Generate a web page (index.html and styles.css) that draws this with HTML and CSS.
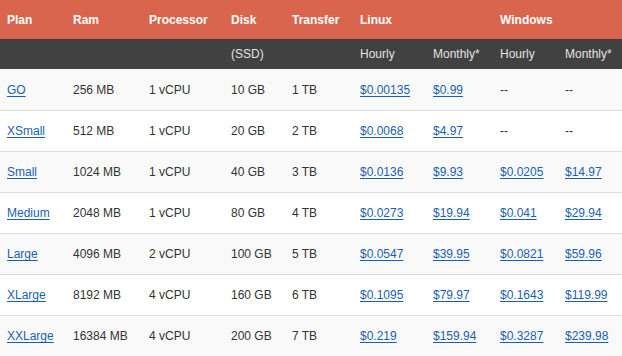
FILE: index.html
```html
<!DOCTYPE html>
<html>
<head>
<meta charset="utf-8">
<link rel="stylesheet" href="styles.css">
</head>
<body>
<table class="plans">
  <colgroup>
    <col class="c-plan"><col class="c-ram"><col class="c-proc"><col class="c-disk"><col class="c-xfer">
    <col class="c-lh"><col class="c-lm"><col class="c-wh"><col class="c-wm">
  </colgroup>
  <thead>
    <tr class="head">
      <th>Plan</th><th>Ram</th><th>Processor</th><th>Disk</th><th>Transfer</th>
      <th colspan="2">Linux</th><th colspan="2">Windows</th>
    </tr>
    <tr class="sub">
      <th></th><th></th><th></th><th>(SSD)</th><th></th>
      <th>Hourly</th><th>Monthly*</th><th>Hourly</th><th>Monthly*</th>
    </tr>
  </thead>
  <tbody>
    <tr><td><a href="#">GO</a></td><td>256 MB</td><td>1 vCPU</td><td>10 GB</td><td>1 TB</td><td><a href="#">$0.00135</a></td><td><a href="#">$0.99</a></td><td>--</td><td>--</td></tr>
    <tr><td><a href="#">XSmall</a></td><td>512 MB</td><td>1 vCPU</td><td>20 GB</td><td>2 TB</td><td><a href="#">$0.0068</a></td><td><a href="#">$4.97</a></td><td>--</td><td>--</td></tr>
    <tr><td><a href="#">Small</a></td><td>1024 MB</td><td>1 vCPU</td><td>40 GB</td><td>3 TB</td><td><a href="#">$0.0136</a></td><td><a href="#">$9.93</a></td><td><a href="#">$0.0205</a></td><td><a href="#">$14.97</a></td></tr>
    <tr><td><a href="#">Medium</a></td><td>2048 MB</td><td>1 vCPU</td><td>80 GB</td><td>4 TB</td><td><a href="#">$0.0273</a></td><td><a href="#">$19.94</a></td><td><a href="#">$0.041</a></td><td><a href="#">$29.94</a></td></tr>
    <tr><td><a href="#">Large</a></td><td>4096 MB</td><td>2 vCPU</td><td>100 GB</td><td>5 TB</td><td><a href="#">$0.0547</a></td><td><a href="#">$39.95</a></td><td><a href="#">$0.0821</a></td><td><a href="#">$59.96</a></td></tr>
    <tr><td><a href="#">XLarge</a></td><td>8192 MB</td><td>4 vCPU</td><td>160 GB</td><td>6 TB</td><td><a href="#">$0.1095</a></td><td><a href="#">$79.97</a></td><td><a href="#">$0.1643</a></td><td><a href="#">$119.99</a></td></tr>
    <tr><td><a href="#">XXLarge</a></td><td>16384 MB</td><td>4 vCPU</td><td>200 GB</td><td>7 TB</td><td><a href="#">$0.219</a></td><td><a href="#">$159.94</a></td><td><a href="#">$0.3287</a></td><td><a href="#">$239.98</a></td></tr>
  </tbody>
</table>
</body>
</html>
```
FILE: styles.css
```css
html, body {
  margin: 0;
  padding: 0;
  background: #ffffff;
}
body {
  font-family: "Liberation Sans", Arial, sans-serif;
  font-size: 12px;
  color: #333333;
}
.plans {
  width: 622px;
  table-layout: fixed;
  border-collapse: separate;
  border-spacing: 0;
}
.c-plan { width: 66px; }
.c-ram { width: 76px; }
.c-proc { width: 82px; }
.c-disk { width: 61px; }
.c-xfer { width: 68px; }
.c-lh { width: 73px; }
.c-lm { width: 67px; }
.c-wh { width: 65px; }
.c-wm { width: 64px; }

.plans th, .plans td {
  padding: 0 0 0 7px;
  text-align: left;
  vertical-align: middle;
  white-space: nowrap;
}
.head {
  height: 39px;
  background: #d9654e;
}
.head th {
  color: #ffffff;
  font-weight: bold;
}
.sub {
  height: 30px;
  background: #414141;
}
.sub th {
  color: #e2e2e2;
  font-weight: normal;
}
.plans tbody tr {
  height: 41px;
}
.plans tbody tr:nth-child(odd) {
  background: #f9f9f9;
}
.plans tbody tr + tr td {
  border-top: 1px solid #dddddd;
}
.plans a {
  color: #1a5fb2;
  text-decoration: underline;
  text-underline-offset: 2px;
}
```
